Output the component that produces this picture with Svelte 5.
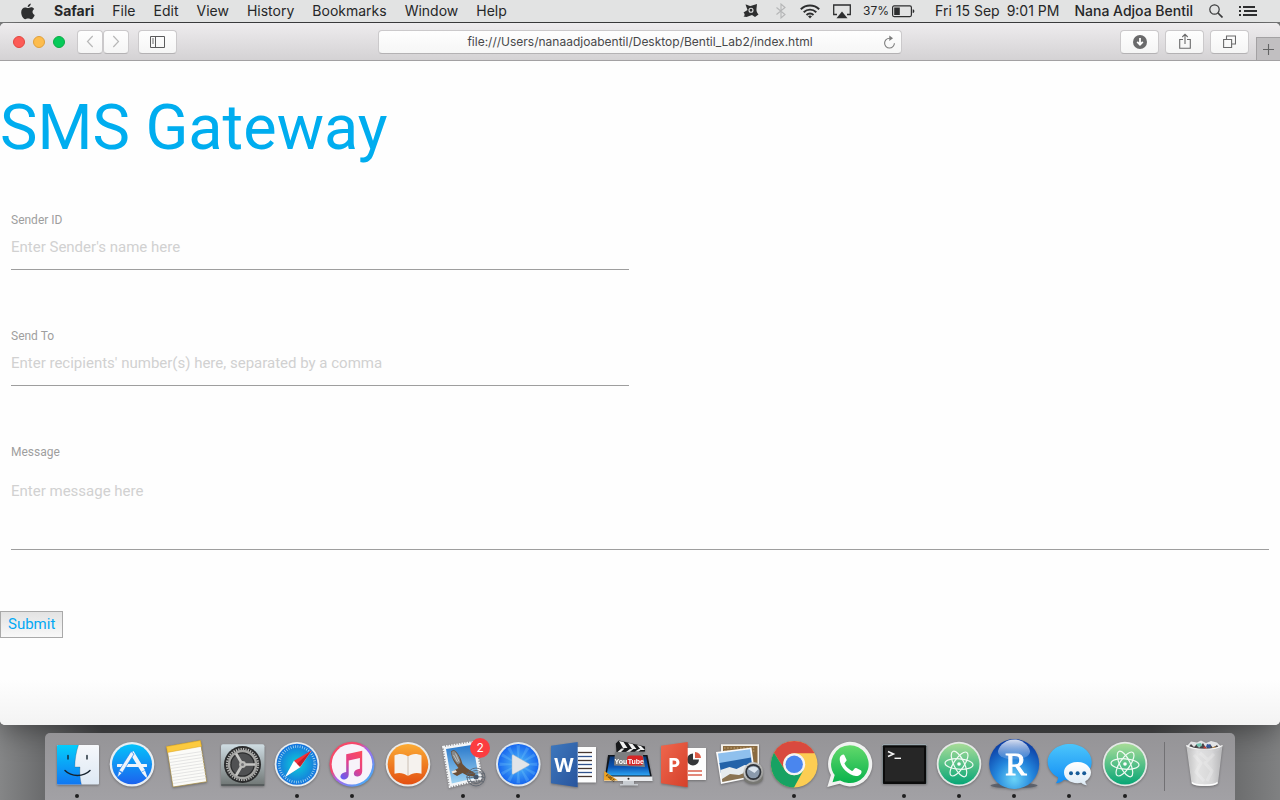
<script>
  const menus = ['File', 'Edit', 'View', 'History', 'Bookmarks', 'Window', 'Help'];

  const apps = [
    { id: 'finder', name: 'Finder', running: true },
    { id: 'store', name: 'App Store' },
    { id: 'notes', name: 'Notes' },
    { id: 'settings', name: 'System Preferences' },
    { id: 'safari', name: 'Safari', running: true },
    { id: 'itunes', name: 'iTunes', running: true },
    { id: 'books', name: 'iBooks' },
    { id: 'mail', name: 'Mail', running: true, badge: 2 },
    { id: 'player', name: 'Player', running: true },
    { id: 'word', name: 'Word' },
    { id: 'youtube', name: 'YouTube' },
    { id: 'powerpoint', name: 'PowerPoint' },
    { id: 'preview', name: 'Preview' },
    { id: 'chrome', name: 'Chrome', running: true },
    { id: 'whatsapp', name: 'WhatsApp' },
    { id: 'terminal', name: 'Terminal', running: true },
    { id: 'atom', name: 'Atom', running: true },
    { id: 'rstudio', name: 'RStudio', running: true },
    { id: 'messages', name: 'Messages', running: true },
    { id: 'atom', name: 'Atom Helper', running: true }
  ];

  const range = (n) => Array.from({ length: n }, (_, i) => i);

  let address = $state('file:///Users/nanaadjoabentil/Desktop/Bentil_Lab2/index.html');
  let sender = $state('');
  let recipients = $state('');
  let message = $state('');
</script>

<svg class="defs" aria-hidden="true">
  <defs>
    <linearGradient id="gFinder" x2="0" y2="1"><stop stop-color="#04cdfb" /><stop offset="1" stop-color="#1177f2" /></linearGradient>
    <linearGradient id="gFace" x2="0" y2="1"><stop stop-color="#f6f8fb" /><stop offset="1" stop-color="#dde8f4" /></linearGradient>
    <linearGradient id="gStore" x2="0" y2="1"><stop stop-color="#04c2fa" /><stop offset="1" stop-color="#1c62ee" /></linearGradient>
    <linearGradient id="gPref" x2="0" y2="1"><stop stop-color="#cfdde3" /><stop offset="1" stop-color="#6f7574" /></linearGradient>
    <radialGradient id="gSafari"><stop stop-color="#0dd0d8" /><stop offset="1" stop-color="#1673dd" /></radialGradient>
    <linearGradient id="gRing" x2="1" y2="1"><stop stop-color="#fb4a63" /><stop offset=".35" stop-color="#f3486d" /><stop offset=".5" stop-color="#a964ef" /><stop offset="1" stop-color="#25c5f8" /></linearGradient>
    <linearGradient id="gNote" x1=".8" x2=".2" y2="1"><stop stop-color="#fb4a5f" /><stop offset=".5" stop-color="#e33f8c" /><stop offset="1" stop-color="#6a5cf0" /></linearGradient>
    <linearGradient id="gBooks" x2="0" y2="1"><stop stop-color="#fbab34" /><stop offset="1" stop-color="#e35012" /></linearGradient>
    <linearGradient id="gSky" x2="0" y2="1"><stop stop-color="#2878cb" /><stop offset="1" stop-color="#9fd3f2" /></linearGradient>
    <radialGradient id="gPlay"><stop stop-color="#53bdf8" /><stop offset="1" stop-color="#1767ef" /></radialGradient>
    <linearGradient id="gWord" x2="1" y2="1"><stop stop-color="#3e78bd" /><stop offset="1" stop-color="#28549d" /></linearGradient>
    <linearGradient id="gPower" x2="1" y2="1"><stop stop-color="#ef674d" /><stop offset="1" stop-color="#d5402a" /></linearGradient>
    <linearGradient id="gScreen" x2="0" y2="1"><stop stop-color="#0a3676" /><stop offset=".55" stop-color="#0b56b5" /><stop offset="1" stop-color="#2da5f4" /></linearGradient>
    <linearGradient id="gWhats" x2="0" y2="1"><stop stop-color="#63d96b" /><stop offset="1" stop-color="#08b24c" /></linearGradient>
    <linearGradient id="gAtom" x2="0" y2="1"><stop stop-color="#a8dc98" /><stop offset="1" stop-color="#07a676" /></linearGradient>
    <radialGradient id="gR" cy=".8" r=".75"><stop stop-color="#6bd4f8" /><stop offset=".5" stop-color="#2385dc" /><stop offset="1" stop-color="#0b3ea5" /></radialGradient>
    <linearGradient id="gGloss" x2="0" y2="1"><stop stop-color="#fff" stop-opacity=".85" /><stop offset="1" stop-color="#9dc0f0" stop-opacity=".25" /></linearGradient>
    <linearGradient id="gMsg" x2="0" y2="1"><stop stop-color="#4cc5fb" /><stop offset="1" stop-color="#118df5" /></linearGradient>
    <linearGradient id="gBubble" x2="0" y2="1"><stop stop-color="#fff" /><stop offset="1" stop-color="#dceaf5" /></linearGradient>
    <linearGradient id="gBin"><stop stop-color="#c3c3c4" /><stop offset=".3" stop-color="#e8e8e8" /><stop offset=".7" stop-color="#dcdcdd" /><stop offset="1" stop-color="#b9b9bb" /></linearGradient>
    <linearGradient id="gMetal" x2="1" y2="1"><stop stop-color="#e0e0df" /><stop offset="1" stop-color="#8c8c8a" /></linearGradient>
  </defs>
</svg>

{#snippet art(id)}
  <svg class="art" viewBox="0 0 52 56" aria-hidden="true">
    {#if id === 'finder'}
      <rect x="6" y="9" width="42" height="39.500" rx="1" fill="url(#gFace)" />
      <path d="M7 9h20.500c-2.400 7-3.600 14-3.700 22h5.200c-.4 6 0 12 1.400 17.500H7a1 1 0 0 1-1-1V10a1 1 0 0 1 1-1z" fill="url(#gFinder)" />
      <path d="M27.500 9c-2.400 7-3.600 14-3.700 22h5.200c-.4 6 0 12 1.400 17.500" fill="none" stroke="#1d3850" stroke-opacity=".35" stroke-width=".7" />
      <path d="M17 19.500v3.500M36 19.500v3.500M14 34.500c6.500 6.600 18.500 6.600 25 0" fill="none" stroke="#15222e" stroke-width="1.400" stroke-linecap="round" />
    {:else if id === 'store'}
      <circle cx="26" cy="28.300" r="22.300" fill="#e9eef2" />
      <circle cx="26" cy="28.300" r="20" fill="url(#gStore)" />
      <g fill="#f0f5fa">
        <rect x="11" y="28" width="30" height="3" rx=".5" />
        <path d="M24 17.500l3.500-2.500 11.500 19-3.600 2zM35.500 36.500l3.500-2 2 5.500-.6 2z" />
        <path d="M25 15.500l3 2.500-11.500 18.500-3.500-2zM12.700 35l3.300 2-4.500 4.300z" stroke="#2282f2" stroke-width=".7" />
      </g>
    {:else if id === 'notes'}
      <path d="M5.700 10.700L39.300 4.700 45.700 45.700 12 51z" fill="#fbfbf8" stroke="#a58a3e" stroke-width=".7" />
      {#each range(10) as i}
        <path d="M{8 + i * 0.45} {20.5 + i * 3}l33-5" stroke="#dedede" stroke-width=".8" />
      {/each}
      <path d="M5.500 10.600L39.300 4.600l1.200 5.700L6.500 16.400z" fill="#fcca3f" stroke="#d8a221" stroke-width=".5" />
    {:else if id === 'settings'}
      <rect x="5" y="8.300" width="43.500" height="41.500" rx="2" fill="url(#gPref)" />
      <rect x="5" y="48" width="43.500" height="2" rx="1" fill="#565b5c" />
      <circle cx="26.500" cy="28.500" r="18.500" fill="#2b2c2d" />
      <circle cx="26.500" cy="28.500" r="15.600" fill="none" stroke="#b9b9b7" stroke-width="2" stroke-dasharray="1.300 1.150" />
      <circle cx="26.500" cy="28.500" r="13.500" fill="none" stroke="#a5a5a3" stroke-width="2.400" />
      <circle cx="26.500" cy="28.500" r="11" fill="#505153" />
      <path d="M26.500 28.500H39M26.500 28.500L20 17.500M26.500 28.500L20 39.500" stroke="#c5c5c3" stroke-width="2.600" />
      <circle cx="26.500" cy="28.500" r="3.400" fill="#bcbcb9" />
      <circle cx="26.500" cy="28.500" r="1.500" fill="#77777a" />
    {:else if id === 'safari'}
      <circle cx="26" cy="28.300" r="22.300" fill="#e8edf0" />
      <circle cx="26" cy="28.300" r="20.500" fill="url(#gSafari)" />
      <circle cx="26" cy="28.300" r="17.800" fill="none" stroke="#b5dff4" stroke-width="2.600" stroke-dasharray=".7 1.630" />
      <path d="M14 41L41 14 29.500 31z" fill="#b8b8bb" />
      <path d="M14 41l9-16.500 6.500 6.500z" fill="#fff" />
      <path d="M40.500 14.500L29 30.800l-6-6z" fill="#f3313b" />
      <path d="M29 30.800l-3-3L40.500 14.500z" fill="#c41f2b" />
    {:else if id === 'itunes'}
      <circle cx="26" cy="28.300" r="22.500" fill="url(#gRing)" />
      <circle cx="26" cy="28.300" r="20.300" fill="#f7f3fa" />
      <path d="M20.200 18.300l16-3.600v20.500c0 3-2 5-4.400 5.300-2.500.3-4.300-1.300-3.900-3.600.4-2.600 3-3.700 6-4.200V22l-11.200 2.500v14c0 3-2 4.800-4.300 5-2.500.3-4.300-1.300-3.900-3.500.4-2.500 3-3.600 5.700-4.100z" fill="url(#gNote)" />
    {:else if id === 'books'}
      <circle cx="26" cy="28.300" r="22.300" fill="#e9eaea" />
      <circle cx="26" cy="28.300" r="20.300" fill="url(#gBooks)" />
      <path d="M26 20.500c3.500-3 9-3.300 13.500-1v18.300c-5-1.500-9.500-.5-12.500 1.700h-2c-3-2.200-7.500-3.200-12.500-1.700V19.500c4.500-2.300 10-2 13.500 1z" fill="#f5f2ee" />
      <path d="M26 20.500v18.500" stroke="#c6b9ad" stroke-width=".9" />
    {:else if id === 'mail'}
      <path d="M6.500 11L38 6l6.500 37L13 50.500z" fill="#f3f5f7" stroke="#f3f5f7" stroke-width="2.600" stroke-dasharray="1.600 1" />
      <path d="M9 13l27-4.300 5.800 32.500L14.800 47.500z" fill="url(#gSky)" />
      <path d="M14 15.500c1.500-2 4-1.500 5.500.5 3 3.500 5 8 6 12l4 4 9 5.500-1 3-6.500-.5-5.500-3-5.500 3-4.500-2.500 1.500-3 4.500-2.500c-4-5-7-9.500-7.500-16.500z" fill="#6b4f37" />
      <path d="M14.500 16c1.500-1.500 3.500-1 4.500.5 2.500 3 4 6.500 4.500 10l-2.500 2c-3.500-3.500-6-7-6.500-12.500z" fill="#85888a" />
      <path d="M16.500 19l4 7M18.500 17.500l3.500 8" stroke="#c4c6c6" stroke-width=".9" />
      <path d="M14.500 35.500l4-1.500 1.500 2-4.500 1.500z" fill="#ece7df" />
      <g fill="none" stroke="#58606b" stroke-width="1" opacity=".8">
        <circle cx="39" cy="41" r="9" /><circle cx="39" cy="41" r="6.500" /><path d="M29 37c5 2 14-2 19 1M29 41c5 2 14-2 19 1M30 45c5 2 12-2 17 1" />
      </g>
      <circle cx="39" cy="41" r="2.500" fill="#46566a" />
    {:else if id === 'player'}
      <circle cx="26.300" cy="28.300" r="22.300" fill="#dfe7ee" />
      <circle cx="26.300" cy="28.300" r="20.300" fill="url(#gPlay)" />
      {#each range(12) as i}
        <path d="M26.300 28.300l-1.800-19h3.600z" fill="#7fd0fb" opacity=".28" transform="rotate({i * 30} 26.300 28.300)" />
      {/each}
      <path d="M20 19.800c0-1 .8-1.300 1.600-.8l15.200 8.700c.9.500.9 1.300 0 1.800L21.600 38c-.8.500-1.600.1-1.600-.8z" fill="#e3e5e8" stroke="#a5b6c9" stroke-width=".5" />
    {:else if id === 'word'}
      <rect x="28" y="11" width="21" height="35.500" fill="#fdfdfd" />
      {#each range(7) as i}
        <path d="M31 {16.500 + i * 4}h14" stroke={i % 2 ? '#31528c' : '#46362f'} stroke-width="1.300" />
      {/each}
      <path d="M4 9.700L30.700 6v45.300L4 47.200z" fill="url(#gWord)" />
      <text x="17" y="35.500" text-anchor="middle" class="office">W</text>
    {:else if id === 'youtube'}
      <path d="M6 19h39.500l5 25.500h-48z" fill="#10151c" />
      <path d="M8 20.500h36l4 19H4.500z" fill="url(#gScreen)" />
      <path d="M2.800 40.500h47.500l.4 4.500H2z" fill="#e9ebee" />
      <path d="M21 45h11v3h4v1.500H18V48h3z" fill="#c9cdd2" />
      <circle cx="26.500" cy="42.800" r="1" fill="#222" />
      <path d="M2.300 35L16 44.500H2z" fill="#f0a422" />
      <text x="3.500" y="40" class="ribbon" transform="rotate(35 3.500 40)">FREE</text>
      <path d="M13 16l27-2.500 3 17.500-31-1.500z" fill="#7c7e80" />
      <path d="M13.800 7.500l3-3L43 10.500v5L14.500 16z" fill="#17181a" />
      <path d="M17 5l4 7h4.500l-4-6zM26 7l4 6h4.500l-4-5zM35 9l4 5h4l-4-4z" fill="#f2f2f2" />
      <path d="M15.500 16l4-3.500h3L19 16zM24 16l4-3h3.500L28 15.800zM33 15.500l4-2.500h3l-3.500 2.500z" fill="#e4e4e4" />
      <rect x="25" y="19.500" width="16" height="10" rx="3" fill="#d62626" />
      <text x="12.500" y="27.500" class="tube">You</text>
      <text x="25.800" y="27.500" class="tube">Tube</text>
    {:else if id === 'powerpoint'}
      <rect x="28" y="12" width="21" height="32" fill="#fdfdfd" />
      <path d="M36 17.500a6 6 0 1 0 6 6h-6z" fill="#343638" />
      <path d="M38 16a6 6 0 0 1 6 6h-6z" fill="#dc5a45" />
      <path d="M31 35h14M31 39h14" stroke="#d9604d" stroke-width="1.300" />
      <path d="M4 9.700L30.700 6v45.300L4 47.200z" fill="url(#gPower)" />
      <text x="17" y="35.500" text-anchor="middle" class="office">P</text>
    {:else if id === 'preview'}
      <path d="M9 8.300h38v29H9z" fill="#f3efe8" />
      <path d="M11 10h34.500v24H11z" fill="#8a6a3f" />
      <path d="M12 12h32M12 15h32" stroke="#c9ab78" stroke-width="1" stroke-dasharray="1.500 1.700" />
      <path d="M4 16l35.500-4.500 4 29.500L9 48z" fill="#fafafa" />
      <path d="M6 17.500L38 13.300l1.400 9L7.500 28z" fill="#8fc0ed" />
      <path d="M7.400 27L39 21.500l1.500 10L8.900 37z" fill="#2463a9" />
      <path d="M8.500 34l9-3 7 2 8-4 8 1 1.200 9.500L10.200 46z" fill="#e6ebee" />
      <path d="M10 43l8-5 9 1 5-2 9 2v1L10.300 46z" fill="#8a7352" />
      <path d="M31.500 36v6c1 8 18.500 8 19.500 0v-6z" fill="#777773" />
      <circle cx="41.300" cy="36" r="10" fill="url(#gMetal)" />
      <circle cx="41.300" cy="36" r="8" fill="#2f3339" />
      <circle cx="41.300" cy="36" r="6.300" fill="#8b9aac" />
      <path d="M36 33c3-3 8-3 10.500 0l-4 4z" fill="#dce5ee" />
    {:else if id === 'chrome'}
      <circle cx="26.200" cy="28.300" r="23.300" fill="#fccd53" />
      <path d="M5.900 16.700A23.300 23.300 0 0 1 46.400 16.700L45.600 17.300H26.200A11 11 0 0 0 16.700 33.800z" fill="#d94a3e" />
      <path d="M6 16.700l10.700 17.100A11 11 0 0 0 35.700 33.800L26 51.600A23.300 23.300 0 0 1 6 16.700z" fill="#17a263" />
      <circle cx="26.200" cy="28.300" r="11" fill="#f4f4f4" />
      <circle cx="26.200" cy="28.300" r="8.700" fill="#4a86ee" />
    {:else if id === 'whatsapp'}
      <path d="M27 5.800a22.300 22.300 0 1 1-10.500 42L4.300 51l3.600-12A22.300 22.300 0 0 1 27 5.800z" fill="#f1f2f1" />
      <path d="M27 9.300a18.900 18.900 0 1 1-9.800 35.200L9.500 46.300l2.200-7.200A18.900 18.900 0 0 1 27 9.300z" fill="url(#gWhats)" />
      <path d="M20.200 18.500c-2 .2-3.600 2.200-3.500 4.700.3 8 9 16.200 16.300 16.800 3 .2 5.600-1.700 5.500-4.400 0-.7-.2-1-.8-1.300l-4.500-2.200c-.7-.3-1.200-.2-1.600.4l-1.600 2c-.4.500-.9.500-1.500.2-3-1.400-5.500-3.900-6.800-6.600-.3-.6-.2-1 .2-1.400l1.300-1.600c.4-.5.500-1 .2-1.500l-2-4.400c-.3-.6-.6-.8-1.200-.7z" fill="#fff" />
    {:else if id === 'terminal'}
      <rect x="4.300" y="8.300" width="44.400" height="39.700" rx="1.500" fill="#a3b3b9" />
      <rect x="4.800" y="9.300" width="43.500" height="38.700" rx="1" fill="#0b0b0b" />
      <rect x="7" y="11.500" width="39" height="34" fill="#262626" />
      <path d="M10 15.500l5.500 2.500-5.500 2.500" fill="none" stroke="#f5f5f5" stroke-width="1.500" />
      <path d="M16.500 22.300H23" stroke="#f5f5f5" stroke-width="1.400" />
    {:else if id === 'atom'}
      <circle cx="26" cy="28" r="22.300" fill="#e5e8e6" />
      <circle cx="26" cy="28" r="20.500" fill="url(#gAtom)" />
      <g fill="none" stroke="#f0faf3" stroke-width="1.200">
        <ellipse cx="26" cy="28" rx="14" ry="5.200" transform="rotate(4 26 28)" />
        <ellipse cx="26" cy="28" rx="14" ry="5.200" transform="rotate(64 26 28)" />
        <ellipse cx="26" cy="28" rx="14" ry="5.200" transform="rotate(-56 26 28)" />
      </g>
      <circle cx="26" cy="28" r="1.800" fill="#fff" />
    {:else if id === 'rstudio'}
      <ellipse cx="26" cy="49.500" rx="23.500" ry="2.700" fill="#4d5460" opacity=".75" />
      <circle cx="26.200" cy="28" r="25" fill="url(#gR)" />
      <path d="M10 15c2-7 9-11.500 16.200-11.500S40 8 42 15c.5 5-7 8.500-16 8.500S9.500 20 10 15z" fill="url(#gGloss)" />
      <text x="28" y="38.500" text-anchor="middle" class="rletter">R</text>
    {:else if id === 'messages'}
      <path d="M26.700 8c12.200 0 22 8 22 18s-9.800 18.500-22 18.500c-2 0-4-.2-5.800-.7-2 2.300-4.800 3.500-8.300 3.500 1.600-1.600 2.500-3.700 2.400-6C8.800 38 4.700 32.500 4.700 26 4.700 16 14.500 8 26.700 8z" fill="url(#gMsg)" />
      <path d="M34.500 26c7.500 0 13.500 4.700 13.500 10.500 0 3.700-2.300 6.900-5.700 8.800 0 1.500.7 2.900 1.700 4-2.300 0-4.300-.9-5.800-2.500-1.200.3-2.400.4-3.700.4-7.500 0-13.500-4.700-13.500-10.700S27 26 34.500 26z" fill="url(#gBubble)" />
      <g fill="#175b98"><circle cx="28" cy="37.300" r="2" /><circle cx="34.600" cy="37.300" r="2" /><circle cx="41.200" cy="37.300" r="2" /></g>
    {:else if id === 'trash'}
      <path d="M9 10l4-4.500 6 1 4-2 5 2.500 5-2 6 1.500 4 4-2 4H11z" fill="#e2e3e5" />
      <path d="M13 8l3 3 3-3 2 4 4-5 3 5 4-4 3 4 4-3 2 3-4 3H12l-2-3z" fill="#494648" />
      <path d="M18 8l5-1 1 3-4 1z" fill="#6fc3b1" /><path d="M29 8l4 1-1 3-4-1z" fill="#34599f" /><path d="M25 12l2-2 2 3z" fill="#c83a32" /><path d="M34 12l3-2 1 3z" fill="#b48243" />
      <path d="M8.300 9.500c8 5 28 5 36.200 0L40 47c-.4 4-26 4-26.500 0z" fill="url(#gBin)" opacity=".95" />
      <path d="M16 19l7 8-5 9 8 9M36 18l-9 9 7 8-5 10M22 17l8 7" fill="none" stroke="#fff" stroke-opacity=".22" stroke-width="3" stroke-linejoin="round" />
      <path d="M8.300 9.500c8 5 28 5 36.200 0" fill="none" stroke="#f6f6f6" stroke-width="1.200" />
      <path d="M14 46.500c3 3.600 22.500 3.600 25.500 0" fill="none" stroke="#fff" stroke-width="1.200" />
    {/if}
  </svg>
{/snippet}

<div class="desktop">
  <header class="menubar">
    <nav class="menus" aria-label="Menu bar">
      <button class="apple" aria-label="Apple">
        <svg width="14" height="17" viewBox="0 0 14 17" aria-hidden="true"><path d="M9.800.5c.1 1.700-1.300 3.600-3.100 3.500C6.500 2.400 8.100.7 9.800.5zM7 5.100c.8 0 1.700-.8 3.100-.8 1.300 0 2.400.7 3.100 1.700-2.500 1.500-2 4.900.5 5.900-.6 1.800-2.100 4.300-3.600 4.300-1.100 0-1.600-.7-3-.7s-1.900.7-2.900.7C2.300 16.200.2 12.700.2 9.300c0-3.200 2-4.900 3.900-4.900 1.200 0 2.200.7 2.900.7z" fill="#2e2f30" /></svg>
      </button>
      <button class="app-name">Safari</button>
      {#each menus as item}
        <button>{item}</button>
      {/each}
    </nav>
    <div class="status">
      <svg width="16" height="16" viewBox="0 0 16 16" aria-hidden="true"><path d="M2.500 1.500c2 .2 3 1.500 5 1.500l6.500-2-.5 4.500c-.3 2 .2 4 2 6l-3.500 2.500-3-2-5.500 2-3-.5C2 12.500 2 11 .5 9.500L4.500 7z" fill="#2d2e2f" /><circle cx="8" cy="7.300" r="2" fill="none" stroke="#e2e3e3" stroke-width="1.100" /></svg>
      <svg class="bluetooth" width="12" height="16" viewBox="0 0 12 16" aria-hidden="true"><path d="M1.500 4.500l8.500 7-4 3.500V1l4 3.500-8.500 7" fill="none" stroke="#b5b6b7" stroke-width="1.100" /></svg>
      <svg class="wifi" width="20" height="15" viewBox="0 0 20 15" aria-hidden="true"><g fill="none" stroke="#2d2e2f" stroke-width="1.900"><path d="M.8 5.300c5.200-5 13.200-5 18.400 0M3.700 8.200c3.600-3.500 9-3.500 12.600 0M6.500 11c2-2 5-2 7 0" /></g><path d="M8 12.300c1.200-1 2.800-1 4 0l-2 2.200z" fill="#2d2e2f" /></svg>
      <svg class="airplay" width="18" height="15" viewBox="0 0 18 15" aria-hidden="true"><path d="M4 10.500H.7V1h16.600v9.500H14" fill="none" stroke="#2d2e2f" stroke-width="1.300" /><path d="M9 7.500l5.500 6.700h-11z" fill="#2d2e2f" /></svg>
      <span class="battery-text">37%</span>
      <svg class="battery" width="23" height="13" viewBox="0 0 23 13" aria-hidden="true"><rect x=".6" y=".9" width="18.800" height="10.700" rx="1.500" fill="none" stroke="#2d2e2f" stroke-width="1.200" /><rect x="2.200" y="2.500" width="5.600" height="7.500" fill="#2d2e2f" /><path d="M20.700 4.300c2.200.5 2.200 3.400 0 3.900z" fill="#2d2e2f" /></svg>
      <span class="day">Fri 15 Sep</span>
      <span class="clock">9:01 PM</span>
      <span class="user">Nana Adjoa Bentil</span>
      <button aria-label="Search"><svg width="14" height="14" viewBox="0 0 14 14" aria-hidden="true"><circle cx="5.500" cy="5.500" r="4.700" fill="none" stroke="#3a3b3c" stroke-width="1.200" /><path d="M9 9l4.500 4.500" stroke="#3a3b3c" stroke-width="1.700" /></svg></button>
      <button class="list" aria-label="Notifications"><svg width="18" height="12" viewBox="0 0 18 12" aria-hidden="true"><path d="M0 2h2M4 2h12M0 6h2M5 6h13M0 10h2M4 10h14" stroke="#2d2e2f" stroke-width="2" /></svg></button>
    </div>
  </header>

  <section class="window">
    <div class="toolbar">
      <div class="left">
        <button class="light red" aria-label="Close"></button>
        <button class="light amber" aria-label="Minimise"></button>
        <button class="light green" aria-label="Zoom"></button>
        <div class="history">
          <button class="tool" aria-label="Back"><svg width="8" height="13" viewBox="0 0 8 13" aria-hidden="true"><path d="M6.700 1L1.500 6.500 6.700 12" fill="none" stroke="#b8b8b8" stroke-width="1.200" /></svg></button>
          <button class="tool" aria-label="Forward"><svg width="8" height="13" viewBox="0 0 8 13" aria-hidden="true"><path d="M1.300 1l5.200 5.500L1.300 12" fill="none" stroke="#b8b8b8" stroke-width="1.200" /></svg></button>
        </div>
        <button class="tool wide" aria-label="Sidebar"><svg width="15" height="12" viewBox="0 0 15 12" aria-hidden="true"><path d="M.5.5h14v11H.5zM5.500.5v11" fill="none" stroke="#5b5b5c" /><path d="M2 3h2M2 5h2M2 7h2" stroke="#5b5b5c" stroke-width=".9" /></svg></button>
      </div>
      <div class="address">
        <input aria-label="Address" bind:value={address} />
        <button aria-label="Reload"><svg width="13" height="14" viewBox="0 0 13 14" aria-hidden="true"><path d="M8 3.200H6.500a4.900 4.900 0 1 0 4.900 5" fill="none" stroke="#7c7c7c" stroke-width="1.100" /><path d="M6.300.4L10 3.200 6.300 6z" fill="#7c7c7c" /></svg></button>
      </div>
      <div class="right">
        <button class="tool wide" aria-label="Downloads"><svg width="14" height="14" viewBox="0 0 14 14" aria-hidden="true"><circle cx="7" cy="7" r="7" fill="#6a6a6b" /><path d="M7 3v6M4.200 6.800L7 9.800l2.800-3" fill="none" stroke="#fff" stroke-width="1.800" /></svg></button>
        <button class="tool wide" aria-label="Share"><svg class="share" width="12" height="16" viewBox="0 0 12 16" aria-hidden="true"><path d="M4 6.500H.7v8.800h10.600V6.500H8M6 11V1.500M3.300 4L6 1.200 8.700 4" fill="none" stroke="#6a6a6b" stroke-width="1.100" /></svg></button>
        <button class="tool wide" aria-label="Tabs"><svg width="13" height="13" viewBox="0 0 13 13" aria-hidden="true"><path d="M.6 4.500h8v8h-8zM3.500 4.500V1h9v8H8.600" fill="none" stroke="#6a6a6b" stroke-width="1.100" /></svg></button>
        <button class="new-tab" aria-label="New tab"><svg width="11" height="11" viewBox="0 0 11 11" aria-hidden="true"><path d="M5.500 0v11M0 5.500h11" stroke="#646465" stroke-width="1.100" /></svg></button>
      </div>
    </div>

    <main class="page">
      <h1>SMS Gateway</h1>
      <form onsubmit={(e) => e.preventDefault()}>
        <div class="field half">
          <label for="sender">Sender ID</label>
          <input id="sender" type="text" placeholder="Enter Sender's name here" bind:value={sender} />
        </div>
        <div class="field half">
          <label for="recipients">Send To</label>
          <input id="recipients" type="text" placeholder="Enter recipients' number(s) here, separated by a comma" bind:value={recipients} />
        </div>
        <div class="field">
          <label for="message">Message</label>
          <textarea id="message" placeholder="Enter message here" bind:value={message}></textarea>
        </div>
        <button class="submit" type="submit">Submit</button>
      </form>
    </main>
  </section>

  <footer class="dock">
    <div class="apps">
      {#each apps as app}
        <button class="dock-item" aria-label={app.name}>
          {@render art(app.id)}
          {#if app.badge}<span class="badge">{app.badge}</span>{/if}
          <span class="dot" class:on={app.running}></span>
        </button>
      {/each}
    </div>
    <span class="divider"></span>
    <button class="dock-item bin" aria-label="Trash">{@render art('trash')}</button>
  </footer>
</div>

<style>
  :global(body) {
    margin: 0;
  }

  .desktop,
  .desktop * {
    box-sizing: border-box;
  }

  .defs {
    position: absolute;
    width: 0;
    height: 0;
  }

  svg {
    display: block;
    flex: none;
  }

  button {
    margin: 0;
    padding: 0;
    border: 0;
    background: none;
    color: inherit;
    font: inherit;
  }

  .desktop {
    display: flex;
    flex-direction: column;
    min-height: 100vh;
    overflow: hidden;
    background: linear-gradient(90deg, #858687, #47484a 8%, #434445 50%, #474849 90%, #808182);
    font-family: Inter, Roboto, sans-serif;
  }

  .menubar {
    position: relative;
    z-index: 1;
    display: flex;
    align-items: center;
    justify-content: space-between;
    height: 22px;
    padding: 0 23px 0 21px;
    background: #e2e3e3;
    color: #262728;
    font-size: 14px;
    line-height: 22px;
    white-space: nowrap;
  }

  .menus,
  .status {
    display: flex;
    align-items: center;
  }

  .menus {
    gap: 18px;
  }

  .apple {
    margin-right: 1px;
  }

  .app-name {
    font-weight: 700;
  }

  .bluetooth {
    margin-left: 16px;
  }

  .wifi {
    margin-left: 13px;
  }

  .airplay {
    margin-left: 13px;
  }

  .battery-text {
    margin-left: 12px;
    font-size: 12px;
  }

  .battery {
    margin-left: 3px;
  }

  .day {
    margin-left: 20px;
  }

  .clock {
    margin-left: 7px;
  }

  .user {
    margin: 0 16px 0 15px;
    font-weight: 500;
  }

  .list {
    margin-left: 16px;
  }

  .window {
    display: flex;
    flex: 1;
    flex-direction: column;
    margin-top: 1px;
    border-radius: 5px;
    background: #fefefe;
    box-shadow: 0 4px 30px rgba(0, 0, 0, 0.45);
    overflow: hidden;
  }

  .toolbar {
    display: grid;
    grid-template-columns: 1fr 41% 1fr;
    align-items: center;
    height: 38px;
    border-bottom: 1px solid #a3a1a3;
    background: linear-gradient(#eeecee, #d4d2d4);
  }

  .left,
  .right,
  .history {
    display: flex;
    align-items: center;
  }

  .left {
    gap: 8px;
    padding-left: 13px;
  }

  .light {
    width: 12px;
    height: 12px;
    border: 1px solid #e2463f;
    border-radius: 50%;
    background: #fc5b57;
  }

  .amber {
    border-color: #e0a03b;
    background: #fdbc4d;
  }

  .green {
    border-color: #0cab46;
    background: #06ca59;
  }

  .history {
    margin: 0 1px 0 4px;
  }

  .tool {
    display: flex;
    align-items: center;
    justify-content: center;
    width: 26px;
    height: 24px;
    border: 1px solid #cbc9cb;
    border-bottom-color: #b4b2b4;
    border-radius: 4px;
    background: linear-gradient(#fefefe, #f5f5f5);
  }

  .wide {
    width: 39px;
  }

  .address {
    display: flex;
    align-items: center;
    height: 24px;
    padding: 0 5px 0 18px;
    border: 1px solid #cbc9cb;
    border-bottom-color: #b4b2b4;
    border-radius: 4px;
    background: linear-gradient(#fefefe, #f6f6f6);
  }

  .address input {
    flex: 1;
    min-width: 0;
    padding: 0;
    border: 0;
    outline: 0;
    background: none;
    color: #48484a;
    font-family: Inter, Roboto, sans-serif;
    font-size: 12px;
    text-align: center;
  }

  .right {
    justify-content: flex-end;
    gap: 6px;
    height: 37px;
  }

  .share {
    margin-bottom: 2px;
  }

  .new-tab {
    display: flex;
    align-items: center;
    justify-content: center;
    align-self: flex-end;
    width: 24px;
    height: 23px;
    margin-left: 1px;
    border: 1px solid #a3a1a3;
    border-width: 1px 0 0 1px;
    background: #c1bfc1;
  }

  .page {
    flex: 1;
    padding: 32px 0 40px;
    background: linear-gradient(transparent calc(100% - 45px), #f3f3f3);
    font-family: Roboto, sans-serif;
  }

  h1 {
    margin: 0 0 50px;
    color: #00adef;
    font-size: 63px;
    font-weight: 400;
    line-height: 70px;
  }

  .field {
    display: flex;
    flex-direction: column;
    margin-bottom: 59px;
    padding: 0 11px;
  }

  .half {
    width: 50%;
  }

  label {
    color: #9e9e9e;
    font-size: 12px;
    line-height: 14px;
  }

  .field input,
  .field textarea {
    display: block;
    width: 100%;
    border: 0;
    border-bottom: 1px solid #9e9e9e;
    border-radius: 0;
    outline: 0;
    background: none;
    color: #333;
    font-family: Roboto, sans-serif;
    font-size: 15px;
  }

  .field input {
    height: 43px;
    padding: 0 0 2px;
  }

  .field textarea {
    height: 91px;
    padding: 21px 0 0;
    line-height: 22px;
    resize: none;
  }

  .field ::placeholder {
    color: #d1d1d1;
  }

  .submit {
    display: block;
    height: 27px;
    margin-top: 61px;
    padding: 0 7px 2px;
    border: 1px solid #a9a9a9;
    background: linear-gradient(#e3e3e3, #f8f8f8);
    color: #03a9f4;
    font-size: 15px;
    line-height: 22px;
  }

  .dock {
    display: flex;
    height: 67px;
    margin: 8px 45px 0;
    padding: 3px 4px 0;
    border-radius: 5px 5px 0 0;
    background: linear-gradient(#959497, #a2a1a5);
  }

  .apps {
    display: flex;
    flex: 1;
  }

  .dock-item {
    position: relative;
    display: flex;
    flex: 1;
    flex-direction: column;
    align-items: center;
    gap: 2px;
  }

  .bin {
    flex: none;
    width: 55px;
  }

  .art {
    width: 52px;
    height: 56px;
    overflow: visible;
    filter: drop-shadow(0 1px 1px rgba(0, 0, 0, 0.3));
  }

  .dot {
    width: 4px;
    height: 4px;
    border-radius: 50%;
  }

  .on {
    background: #1f1f20;
  }

  .badge {
    position: absolute;
    top: 2px;
    right: 0;
    width: 20px;
    height: 20px;
    border-radius: 50%;
    background: #fb3c40;
    color: #fff;
    font-size: 12px;
    line-height: 20px;
    text-align: center;
  }

  .divider {
    width: 1px;
    height: 49px;
    margin: 6px 11px 0 12px;
    background: #727174;
  }

  .office {
    fill: #fff;
    font-family: "Open Sans", sans-serif;
    font-size: 20px;
    font-weight: 700;
  }

  .tube {
    fill: #fff;
    font-family: "Liberation Sans", sans-serif;
    font-size: 7px;
    font-weight: 700;
  }

  .ribbon {
    fill: #4a2f08;
    font-family: "Liberation Sans", sans-serif;
    font-size: 4px;
    font-weight: 700;
  }

  .rletter {
    fill: #fff;
    stroke: #fff;
    stroke-width: 1px;
    font-family: "Liberation Serif", serif;
    font-size: 32px;
  }
</style>
